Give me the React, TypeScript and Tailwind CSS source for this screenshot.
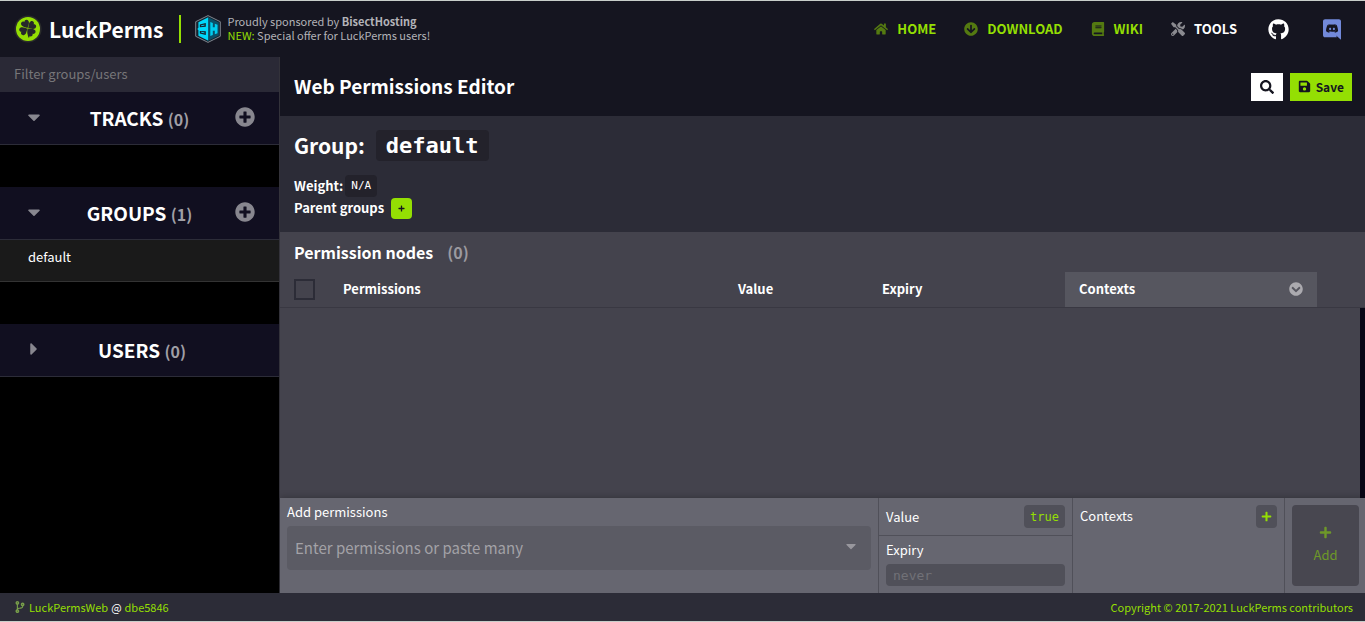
import React from "react";
import {
  FaArrowCircleDown,
  FaBook,
  FaCaretDown,
  FaCaretRight,
  FaChevronCircleDown,
  FaCodeBranch,
  FaGithub,
  FaHome,
  FaPlus,
  FaPlusCircle,
  FaSave,
  FaSearch,
  FaTools,
} from "react-icons/fa";

const LEAF = "M0-.5C-1.300-2-4.300-3.800-4.100-6.300-3.900-8.600-1-9.200 0-7.200 1-9.200 3.900-8.600 4.100-6.300 4.300-3.800 1.300-2 0-.5z";

function CloverLogo() {
  return (
    <svg viewBox="0 0 28 28" className="size-7 shrink-0" aria-hidden="true">
      <circle cx="14" cy="14" r="13.6" fill="#2a2c2b" />
      <circle cx="14" cy="14" r="12" fill="#94df03" />
      <g fill="#26282b" transform="translate(13.800 13.400)">
        <path d={LEAF} transform="rotate(-28)" />
        <path d={LEAF} transform="rotate(55)" />
        <path d={LEAF} transform="rotate(138)" />
        <path d={LEAF} transform="rotate(242)" />
        <path d="M-.3.200L.5 0C.4 3.200 1 6 1.900 8.700L.7 9.300C-.4 6.300-.8 3.400-.3.200z" />
      </g>
    </svg>
  );
}

function BisectLogo() {
  return (
    <svg viewBox="0 0 26 28" className="h-7 w-[26px] shrink-0" aria-hidden="true">
      <path d="M13 .6L25.300 6.700v14.600L13 27.400.7 21.300V6.700z" fill="#15222e" stroke="#8b929b" strokeWidth=".9" />
      <path d="M13.800 2.500L23.800 7.500v13L13.800 25.500z" fill="#0a4f68" />
      <path d="M13.300 2.300v23.400L3.400 20.700v-5.500L2.300 14l1.100-1.200V7.300z" fill="#00d9fa" />
      <path d="M4.800 9.600l6-1.500v3.700l-6 .4zM4.800 16l6 .3v3.700l-6-1.600z" fill="#15222e" />
      <path d="M6.200 10.700l3.300-.6M6.200 17.200l3.300.7" stroke="#00d9fa" strokeWidth=".9" />
      <path d="M15.300 7l2.500.9v4.300h2V8.700l2.700 1v8.600l-2.700 1v-3.500h-2v4.300l-2.500.9z" fill="#00cdf0" />
    </svg>
  );
}

function DiscordIcon() {
  return (
    <svg viewBox="0 0 448 512" fill="currentColor" className="h-[21px] w-[18px]" aria-hidden="true">
      <path d="M297.216 243.2c0 15.616-11.52 28.416-26.112 28.416-14.336 0-26.112-12.8-26.112-28.416s11.52-28.416 26.112-28.416c14.592 0 26.112 12.8 26.112 28.416zm-119.552-28.416c-14.592 0-26.112 12.8-26.112 28.416s11.776 28.416 26.112 28.416c14.592 0 26.112-12.8 26.112-28.416.256-15.616-11.52-28.416-26.112-28.416zM448 52.736V512c-64.494-56.994-43.868-38.128-118.784-107.776l13.568 47.36H52.48C23.552 451.584 0 428.032 0 398.848V52.736C0 23.552 23.552 0 52.48 0h343.04C424.448 0 448 23.552 448 52.736zm-72.96 242.688c0-82.432-36.864-149.248-36.864-149.248-36.864-27.648-71.936-26.88-71.936-26.88l-3.584 4.096c43.52 13.312 63.744 32.512 63.744 32.512-60.811-33.329-132.244-33.335-191.232-7.424-9.472 4.352-15.104 7.424-15.104 7.424s21.248-20.224 67.328-33.536l-2.56-3.072s-35.072-.768-71.936 26.88c0 0-36.864 66.816-36.864 149.248 0 0 21.504 37.12 78.08 38.912 0 0 9.472-11.52 17.152-21.248-32.512-9.728-44.8-30.208-44.8-30.208 3.766 2.636 9.976 6.053 10.496 6.4 43.21 24.198 104.588 32.126 159.744 8.96 8.96-3.328 18.944-8.192 29.44-15.104 0 0-12.8 20.992-46.336 30.464 7.68 9.728 16.896 20.736 16.896 20.736 56.576-1.792 78.336-38.912 78.336-38.912z" />
    </svg>
  );
}

const navLinks = [
  { label: "HOME", icon: FaHome },
  { label: "DOWNLOAD", icon: FaArrowCircleDown },
  { label: "WIKI", icon: FaBook },
];

function Header() {
  return (
    <header className="flex h-14 shrink-0 items-center justify-between bg-[#151520] pl-3.5 pr-6">
      <div className="flex items-center">
        <a href="#home" className="flex items-center gap-[7px] text-[21px] font-bold leading-7 text-white">
          <CloverLogo />
          LuckPerms
        </a>
        <a
          href="#sponsor"
          className="ml-[15px] flex h-7 items-center gap-[7px] border-l-2 border-[#94df03] pl-3.5 text-[11px] leading-[14px] text-[#b3b3b8]"
        >
          <BisectLogo />
          <span className="pb-0.5">
            Proudly sponsored by <b>BisectHosting</b>
            <br />
            <span className="text-[#94df03]">NEW:</span> Special offer for LuckPerms users!
          </span>
        </a>
      </div>
      <nav className="flex items-center text-[13px] font-bold leading-5">
        {navLinks.map(({ label, icon: Icon }) => (
          <a key={label} href={"#" + label.toLowerCase()} className="mr-7 flex items-center gap-[9px] text-[#94df03]">
            <Icon className="size-3.5 opacity-50" />
            {label}
          </a>
        ))}
        <button type="button" className="mr-[31px] flex items-center gap-[9px] text-white">
          <FaTools className="size-3.5 opacity-50" />
          TOOLS
        </button>
        <a href="#github" aria-label="GitHub" className="mr-[34px] text-white">
          <FaGithub className="size-[21px]" />
        </a>
        <a href="#discord" aria-label="Discord" className="text-[#7289da]">
          <DiscordIcon />
        </a>
      </nav>
    </header>
  );
}

type SectionProps = { title: string; count: number; open?: boolean; children?: React.ReactNode };

function SidebarSection({ title, count, open = false, children }: SectionProps) {
  const Caret = open ? FaCaretDown : FaCaretRight;
  return (
    <section className="mb-[42px]">
      <div className="flex h-[53px] items-center justify-between border-b border-[#2c2c38] bg-[#110f20] px-6">
        <button type="button" aria-label={"Toggle " + title} className="flex w-5 justify-center pb-0.5 text-[#88878f]">
          <Caret className="size-5" />
        </button>
        <h2 className="text-[19px] font-bold leading-7 text-white">
          {title} <span className="text-base text-[#a09fa6]">({count})</span>
        </h2>
        {open ? (
          <button type="button" aria-label={"Add to " + title} className="pb-0.5 text-[#88878f]">
            <FaPlusCircle className="size-5" />
          </button>
        ) : (
          <span className="w-[15px]" />
        )}
      </div>
      {children}
    </section>
  );
}

function Sidebar() {
  return (
    <aside className="flex w-[280px] shrink-0 flex-col border-r border-[#33323a] bg-black">
      <input
        type="text"
        aria-label="Filter groups/users"
        placeholder="Filter groups/users"
        className="h-[35px] w-full bg-[#2a2936] px-3.5 pb-0.5 text-[13px] text-white outline-none placeholder:text-[#777679]"
      />
      <SidebarSection title="TRACKS" count={0} open />
      <SidebarSection title="GROUPS" count={1} open>
        <a
          href="#default"
          className="block h-[42px] border-b border-[#333] bg-[#1a1a1a] px-7 pt-[7px] text-[13px] leading-5 text-white"
        >
          default
        </a>
      </SidebarSection>
      <SidebarSection title="USERS" count={0} />
    </aside>
  );
}

function GroupSummary() {
  return (
    <section className="h-[116px] shrink-0 bg-[#2c2c37] px-3.5 pt-3.5 text-[13px] font-bold leading-[22px] text-white">
      <h1 className="flex items-center gap-[11px] text-[21px] leading-[31px]">
        Group:
        <code className="rounded-sm bg-[#23222b] px-2.5 font-['DejaVu_Sans_Mono',monospace] text-[22px]">
          default
        </code>
      </h1>
      <div className="mt-3.5 flex items-center gap-0.5">
        Weight:
        <code className="rounded-sm bg-[#23222b] px-1.5 font-['DejaVu_Sans_Mono',monospace] text-[11px] font-normal leading-[22px]">
          N/A
        </code>
      </div>
      <div className="flex items-center gap-[7px]">
        Parent groups
        <button
          type="button"
          aria-label="Add parent group"
          className="flex size-[21px] items-center justify-center rounded-sm bg-[#94df03] text-[#151520]"
        >
          <FaPlus className="size-[7px]" />
        </button>
      </div>
    </section>
  );
}

function NodeList() {
  return (
    <section className="flex flex-1 flex-col bg-[#44434d] text-white">
      <h2 className="flex h-10 shrink-0 items-center gap-3.5 px-3.5 text-base font-bold">
        Permission nodes <span className="text-[#9b9aa0]">(0)</span>
      </h2>
      <table className="w-full table-fixed text-left text-[13px] leading-5">
        <thead>
          <tr className="h-[35px] border-b border-[#393842]">
            <th className="w-[49px] pl-3.5">
              <input
                type="checkbox"
                aria-label="Select all permissions"
                className="block size-[21px] appearance-none border-2 border-[#2c2c37]"
              />
            </th>
            <th className="pl-3.5">Permissions</th>
            <th className="w-36 pl-3.5">Value</th>
            <th className="w-[197px] pl-3.5">Expiry</th>
            <th className="w-[252px] bg-[#56565f] px-3.5">
              <button type="button" className="flex w-full items-center justify-between">
                Contexts
                <FaChevronCircleDown className="size-3.5 text-[#abaaaf]" />
              </button>
            </th>
            <th className="w-12" aria-label="Actions" />
          </tr>
        </thead>
      </table>
      <div className="flex-1 border-r-[5px] border-[#080716]" />
    </section>
  );
}

function AddPanel() {
  return (
    <form className="flex h-[95px] shrink-0 bg-[#666670] text-[13px] leading-5 text-white shadow-[0_0_7px_rgba(0,0,0,0.3)]">
      <div className="flex-1 px-[7px] pt-1">
        <label htmlFor="permissions">Add permissions</label>
        <div className="mt-1 flex h-11 items-center rounded-sm bg-[#5b5b64] pl-2 pr-3">
          <input
            id="permissions"
            type="text"
            placeholder="Enter permissions or paste many"
            className="min-w-0 flex-1 text-[15px] outline-none placeholder:text-[#a3a2a7]"
          />
          <FaCaretDown className="mb-1 size-4 text-[#98979d]" />
        </div>
      </div>
      <div className="flex w-[194px] flex-col border-l border-[#505059]">
        <div className="flex h-[38px] items-center justify-between border-b border-[#505059] px-[7px]">
          Value
          <button
            type="button"
            className="h-[23px] rounded-sm bg-[#505059] px-1.5 font-['DejaVu_Sans_Mono',monospace] text-xs text-[#94df03]"
          >
            true
          </button>
        </div>
        <div className="px-[7px] pt-1">
          <label htmlFor="expiry" className="block">
            Expiry
          </label>
          <input
            id="expiry"
            type="text"
            placeholder="never"
            className="mt-1 block h-[22px] w-full rounded-sm bg-[#505059] px-[7px] font-['DejaVu_Sans_Mono',monospace] text-[13px] outline-none placeholder:text-[#717177]"
          />
        </div>
      </div>
      <div className="flex w-[212px] items-start justify-between border-l border-[#505059] p-[7px]">
        <span className="leading-[22px]">Contexts</span>
        <button
          type="button"
          aria-label="Add context"
          className="flex h-[23px] w-[21px] items-center justify-center rounded-sm bg-[#505059] text-[#94df03]"
        >
          <FaPlus className="size-[11px]" />
        </button>
      </div>
      <div className="flex w-[81px] border-l border-[#505059] py-[7px] pl-[7px] pr-1.5">
        <button
          type="submit"
          className="flex flex-1 flex-col items-center justify-center gap-1.5 rounded-sm bg-[#484750] text-[#6e9829]"
        >
          <FaPlus className="size-[13px]" />
          Add
        </button>
      </div>
    </form>
  );
}

export default function App() {
  return (
    <div className="flex min-h-screen flex-col border-b border-t border-[#c8ceca] bg-[#080716] font-['Noto_Sans_CJK_SC',sans-serif]">
      <Header />
      <div className="flex flex-1">
        <Sidebar />
        <main className="flex min-w-0 flex-1 flex-col">
          <div className="flex h-[59px] shrink-0 items-center justify-between bg-[#151520] pl-3.5 pr-[13px]">
            <h1 className="pb-0.5 text-[19px] font-bold leading-7 text-white">Web Permissions Editor</h1>
            <div className="flex gap-[7px] text-[#151520]">
              <button type="button" aria-label="Search" className="flex h-7 w-8 items-center justify-center bg-white">
                <FaSearch className="size-3.5" />
              </button>
              <button
                type="button"
                className="flex h-7 items-center gap-[5px] bg-[#94df03] px-2 text-xs font-bold leading-5"
              >
                <FaSave className="size-[13px]" />
                Save
              </button>
            </div>
          </div>
          <GroupSummary />
          <NodeList />
          <AddPanel />
        </main>
      </div>
      <footer className="flex h-7 shrink-0 items-center justify-between bg-[#2c2c37] pl-3.5 pr-3 text-[11px] leading-5 text-[#94df03]">
        <div className="flex items-center gap-[3px]">
          <FaCodeBranch className="size-3 text-[#789f4a]" />
          <a href="#repository">LuckPermsWeb</a>
          <span className="text-white">@</span>
          <a href="#commit">dbe5846</a>
        </div>
        <a href="#contributors">Copyright © 2017-2021 LuckPerms contributors</a>
      </footer>
    </div>
  );
}
